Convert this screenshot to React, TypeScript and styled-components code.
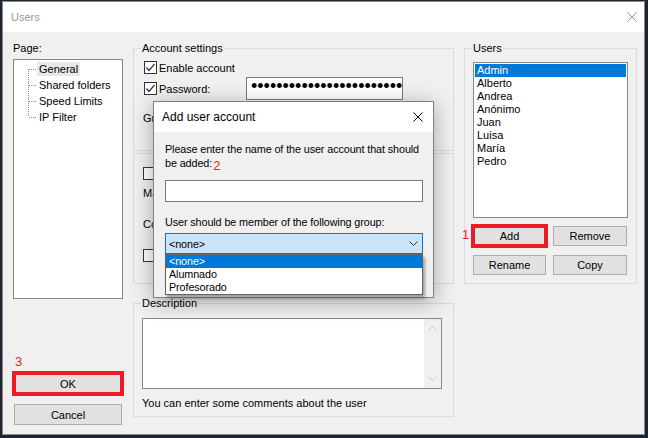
import styled, { createGlobalStyle, css } from "styled-components";

const GlobalStyle = createGlobalStyle`
  * { box-sizing: border-box; }
  html, body { margin: 0; padding: 0; }
  body {
    background: #1d2431;
    font-family: "Liberation Sans", Arial, sans-serif;
    font-size: 11px;
    color: #000;
    overflow: hidden;
  }
`;

const Desktop = styled.div`
  width: 648px;
  height: 438px;
  padding: 1px 0 0 2px;
`;

const Window = styled.div`
  position: relative;
  width: 643px;
  height: 434px;
  border: 1px solid #8a8a8a;
  background: #f0f0f0;
  display: flex;
  flex-direction: column;
`;

const TitleBar = styled.div`
  flex: none;
  height: 30px;
  background: #fff;
  display: flex;
  align-items: center;
  justify-content: space-between;
  padding: 0 7px 0 8px;
  color: #9a9a9a;
  font-size: 11px;
`;

const Body = styled.div`
  flex: 1;
  display: grid;
  grid-template-columns: 110px 321px 173px;
  column-gap: 10px;
  padding: 9px 0 9px 10px;
`;

const Column = styled.div`
  display: flex;
  flex-direction: column;
`;

const PageLabel = styled.div`
  line-height: 15px;
`;

const Tree = styled.div`
  margin-top: 3px;
  height: 240px;
  border: 1px solid #828790;
  background: #fff;
  padding: 1px 0 0 14px;
`;

const TreeRow = styled.div`
  display: flex;
  align-items: center;
  height: 16px;
`;

const TreeLabel = styled.span<{ $selected?: boolean }>`
  padding: 0 2px;
  line-height: 14px;
  background: ${(p) => (p.$selected ? "#e8e8e8" : "transparent")};
`;

const FooterButtons = styled.div`
  margin-top: auto;
  display: flex;
  flex-direction: column;
`;

const StepMark = styled.span`
  color: #ed1c24;
  font-size: 13px;
  line-height: 15px;
`;

const StepLine = styled.div`
  padding-left: 2px;
  margin-bottom: 4px;
`;

const PushButton = styled.button<{ $marked?: boolean; $width?: number }>`
  height: ${(p) => (p.$width ? 21 : 20)}px;
  width: ${(p) => (p.$width ? `${p.$width}px` : "auto")};
  border: 1px solid #adadad;
  background: #e1e1e1;
  font: inherit;
  color: #000;
  padding: 0;
  ${(p) =>
    p.$marked &&
    css`
      outline: 4px solid #ed1c24;
      outline-offset: -2px;
    `}
`;

const SideButton = styled(PushButton)`
  margin-left: 1px;
`;

const CancelButton = styled(SideButton)`
  margin-top: 10px;
`;

const Group = styled.fieldset<{ $height: number; $mt?: number }>`
  margin: ${(p) => p.$mt || 0}px 0 0;
  padding: 0 8px;
  border: 1px solid #dcdcdc;
  min-width: 0;
  height: ${(p) => p.$height}px;
`;

const GroupTitle = styled.legend`
  padding: 0 1px;
  margin-left: -1px;
  line-height: 15px;
  font-size: 11px;
`;

const Panel = styled.div`
  margin-top: 2px;
  height: 131px;
  border: 1px solid #dcdcdc;
  padding: 11px 8px 0 9px;
`;

const FormRow = styled.div<{ $h: number; $mt?: number; $indent?: number }>`
  display: flex;
  align-items: center;
  height: ${(p) => p.$h}px;
  margin-top: ${(p) => p.$mt || 0}px;
  margin-left: ${(p) => p.$indent || 0}px;
`;

const CheckLabel = styled.label<{ $width?: number }>`
  display: flex;
  align-items: center;
  gap: 2px;
  flex: ${(p) => (p.$width ? `0 0 ${p.$width}px` : "none")};
`;

const CheckBox = styled.span`
  width: 13px;
  height: 13px;
  border: 1px solid #333;
  background: #fff;
  display: flex;
`;

const FieldLabel = styled.span<{ $width: number }>`
  flex: 0 0 ${(p) => p.$width}px;
`;

const TextBox = styled.div<{ $width: number; $height: number }>`
  width: ${(p) => p.$width}px;
  height: ${(p) => p.$height}px;
  border: 1px solid #7a7a7a;
  background: #fff;
`;

const PasswordBox = styled(TextBox)`
  overflow: hidden;
  white-space: nowrap;
  padding-left: 4px;
  font-size: 18px;
  line-height: 17px;
`;

const MemoBox = styled.div`
  margin-top: 7px;
  width: 300px;
  height: 71px;
  border: 1px solid #828790;
  background: #fff;
  display: flex;
  justify-content: flex-end;
`;

const ScrollTrack = styled.div`
  width: 17px;
  background: #f0f0f0;
  display: flex;
  flex-direction: column;
  justify-content: space-between;
  align-items: center;
  padding: 7px 0 7px;
`;

const HelpText = styled.div`
  margin-top: 7px;
  line-height: 15px;
`;

const ListBox = styled.div`
  margin-top: 6px;
  height: 156px;
  border: 1px solid #828790;
  background: #fff;
  padding: 1px 1px 0;
`;

const ListItem = styled.div<{ $selected?: boolean }>`
  height: 13px;
  line-height: 13px;
  padding-left: 2px;
  background: ${(p) => (p.$selected ? "#0078d7" : "transparent")};
  color: ${(p) => (p.$selected ? "#fff" : "#000")};
`;

const ButtonGrid = styled.div`
  margin-top: 8px;
  display: grid;
  grid-template-columns: 73px 74px;
  column-gap: 7px;
  row-gap: 9px;
`;

const Anchor = styled.div`
  position: relative;
  display: flex;
  flex-direction: column;
`;

const SideMark = styled(StepMark)`
  position: absolute;
  left: -11px;
  top: 1px;
`;

/* modal dialog on top of the window */
const Dialog = styled.div`
  position: absolute;
  left: 150px;
  top: 99px;
  width: 281px;
  height: 197px;
  border: 1px solid #7f7f7f;
  background: #f0f0f0;
  box-shadow: 0 4px 20px rgba(0, 0, 0, 0.32);
  display: flex;
  flex-direction: column;
`;

const DialogTitle = styled.div`
  flex: none;
  height: 30px;
  background: #fff;
  display: flex;
  align-items: center;
  justify-content: space-between;
  padding: 0 10px 0 8px;
  font-size: 12px;
`;

const DialogBody = styled.div`
  flex: 1;
  padding: 10px 10px 0 11px;
  font-size: 10.8px;
  letter-spacing: -0.1px;
`;

const Prompt = styled.div<{ $mt?: number }>`
  line-height: 14px;
  margin-top: ${(p) => p.$mt || 0}px;
`;

const InlineMark = styled.span`
  color: #ed1c24;
  font-size: 13px;
  letter-spacing: 0;
  margin-left: 1px;
  vertical-align: -3px;
`;

const NameInput = styled.div`
  margin-top: 7px;
  height: 22px;
  border: 1px solid #7a7a7a;
  background: #fff;
`;

const ComboWrap = styled.div`
  position: relative;
  margin-top: 4px;
`;

const Combo = styled.div`
  height: 21px;
  border: 1px solid #0078d7;
  background: #cce4f7;
  display: flex;
  align-items: center;
  justify-content: space-between;
  padding: 0 4px 0 3px;
`;

const DropList = styled.div`
  position: absolute;
  top: 100%;
  left: 0;
  right: 0;
  border: 1px solid #646464;
  background: #fff;
  box-shadow: 2px 3px 3px rgba(0, 0, 0, 0.35);
  z-index: 2;
`;

const DropItem = styled.div<{ $selected?: boolean }>`
  height: 13px;
  line-height: 13px;
  padding-left: 3px;
  background: ${(p) => (p.$selected ? "#0078d7" : "transparent")};
  color: ${(p) => (p.$selected ? "#fff" : "#000")};
`;

const CloseIcon = ({ color, size }: { color: string; size: number }) => (
  <svg width={size} height={size} viewBox="0 0 10 10">
    <path d="M0.5 0.5 L9.5 9.5 M9.5 0.5 L0.5 9.5" stroke={color} strokeWidth="1" fill="none" />
  </svg>
);

const Check = ({ checked }: { checked?: boolean }) => (
  <CheckBox>
    {checked && (
      <svg width="11" height="11" viewBox="0 0 11 11">
        <path d="M1.5 5.5 L4 8.5 L9.5 2" stroke="#333" strokeWidth="1.2" fill="none" />
      </svg>
    )}
  </CheckBox>
);

const Connector = ({ pos }: { pos: "first" | "mid" | "last" }) => {
  const y1 = pos === "first" ? 8 : 0;
  const y2 = pos === "last" ? 8 : 16;
  return (
    <svg width="9" height="16" viewBox="0 0 9 16">
      <path
        d={`M0.5 ${y1} V${y2} M1 8.5 H9`}
        stroke="#8a8a8a"
        strokeWidth="1"
        strokeDasharray="1 1"
        fill="none"
      />
    </svg>
  );
};

const Chevron = ({ dir, color }: { dir: "up" | "down"; color: string }) => (
  <svg width="9" height="5" viewBox="0 0 9 5">
    <path
      d={dir === "down" ? "M0.5 0.5 L4.5 4.5 L8.5 0.5" : "M0.5 4.5 L4.5 0.5 L8.5 4.5"}
      stroke={color}
      strokeWidth="1"
      fill="none"
    />
  </svg>
);

const pages = ["General", "Shared folders", "Speed Limits", "IP Filter"];
const users = ["Admin", "Alberto", "Andrea", "Anónimo", "Juan", "Luisa", "María", "Pedro"];
const groups = ["<none>", "Alumnado", "Profesorado"];

export default function App() {
  return (
    <Desktop>
      <GlobalStyle />
      <Window>
        <TitleBar>
          <span>Users</span>
          <CloseIcon color="#9a9a9a" size={10} />
        </TitleBar>

        <Body>
          <Column>
            <PageLabel>Page:</PageLabel>
            <Tree>
              {pages.map((p, i) => (
                <TreeRow key={p}>
                  <Connector pos={i === 0 ? "first" : i === pages.length - 1 ? "last" : "mid"} />
                  <TreeLabel $selected={i === 0}>{p}</TreeLabel>
                </TreeRow>
              ))}
            </Tree>
            <FooterButtons>
              <StepLine>
                <StepMark>3</StepMark>
              </StepLine>
              <SideButton $width={108} $marked>
                OK
              </SideButton>
              <CancelButton $width={108}>Cancel</CancelButton>
            </FooterButtons>
          </Column>

          <Column>
            <Group $height={110}>
              <GroupTitle>Account settings</GroupTitle>
              <FormRow $h={17} $mt={3} $indent={2}>
                <CheckLabel>
                  <Check checked />
                  <span>Enable account</span>
                </CheckLabel>
              </FormRow>
              <FormRow $h={25} $indent={2}>
                <CheckLabel $width={102}>
                  <Check checked />
                  <span>Password:</span>
                </CheckLabel>
                <PasswordBox $width={157} $height={23}>
                  {"•".repeat(24)}
                </PasswordBox>
              </FormRow>
              <FormRow $h={21} $mt={6} $indent={1}>
                <FieldLabel $width={103}>Group membership:</FieldLabel>
                <TextBox $width={157} $height={21} />
              </FormRow>
            </Group>

            <Panel>
              <FormRow $h={16}>
                <CheckLabel>
                  <Check />
                  <span>Bypass userlimit of server</span>
                </CheckLabel>
              </FormRow>
              <FormRow $h={22} $mt={1}>
                <FieldLabel $width={160}>Maximum connection count:</FieldLabel>
                <TextBox $width={60} $height={20} />
              </FormRow>
              <FormRow $h={22} $mt={9}>
                <FieldLabel $width={160}>Connection limit per IP:</FieldLabel>
                <TextBox $width={60} $height={20} />
              </FormRow>
              <FormRow $h={17} $mt={12}>
                <CheckLabel>
                  <Check />
                  <span>Force SSL for user login</span>
                </CheckLabel>
              </FormRow>
            </Panel>

            <Group $height={121} $mt={12}>
              <GroupTitle>Description</GroupTitle>
              <MemoBox>
                <ScrollTrack>
                  <Chevron dir="up" color="#c4c4c4" />
                  <Chevron dir="down" color="#c4c4c4" />
                </ScrollTrack>
              </MemoBox>
              <HelpText>You can enter some comments about the user</HelpText>
            </Group>
          </Column>

          <Column>
            <Group $height={243}>
              <GroupTitle>Users</GroupTitle>
              <ListBox>
                {users.map((u, i) => (
                  <ListItem key={u} $selected={i === 0}>
                    {u}
                  </ListItem>
                ))}
              </ListBox>
              <ButtonGrid>
                <Anchor>
                  <SideMark>1</SideMark>
                  <PushButton $marked>Add</PushButton>
                </Anchor>
                <PushButton>Remove</PushButton>
                <PushButton>Rename</PushButton>
                <PushButton>Copy</PushButton>
              </ButtonGrid>
            </Group>
          </Column>
        </Body>

        <Dialog>
          <DialogTitle>
            <span>Add user account</span>
            <CloseIcon color="#000" size={10} />
          </DialogTitle>
          <DialogBody>
            <Prompt>
              Please enter the name of the user account that should be added:
              <InlineMark>2</InlineMark>
            </Prompt>
            <NameInput />
            <Prompt $mt={13}>User should be member of the following group:</Prompt>
            <ComboWrap>
              <Combo>
                <span>{"<none>"}</span>
                <Chevron dir="down" color="#333" />
              </Combo>
              <DropList>
                {groups.map((g, i) => (
                  <DropItem key={g} $selected={i === 0}>
                    {g}
                  </DropItem>
                ))}
              </DropList>
            </ComboWrap>
          </DialogBody>
        </Dialog>
      </Window>
    </Desktop>
  );
}
